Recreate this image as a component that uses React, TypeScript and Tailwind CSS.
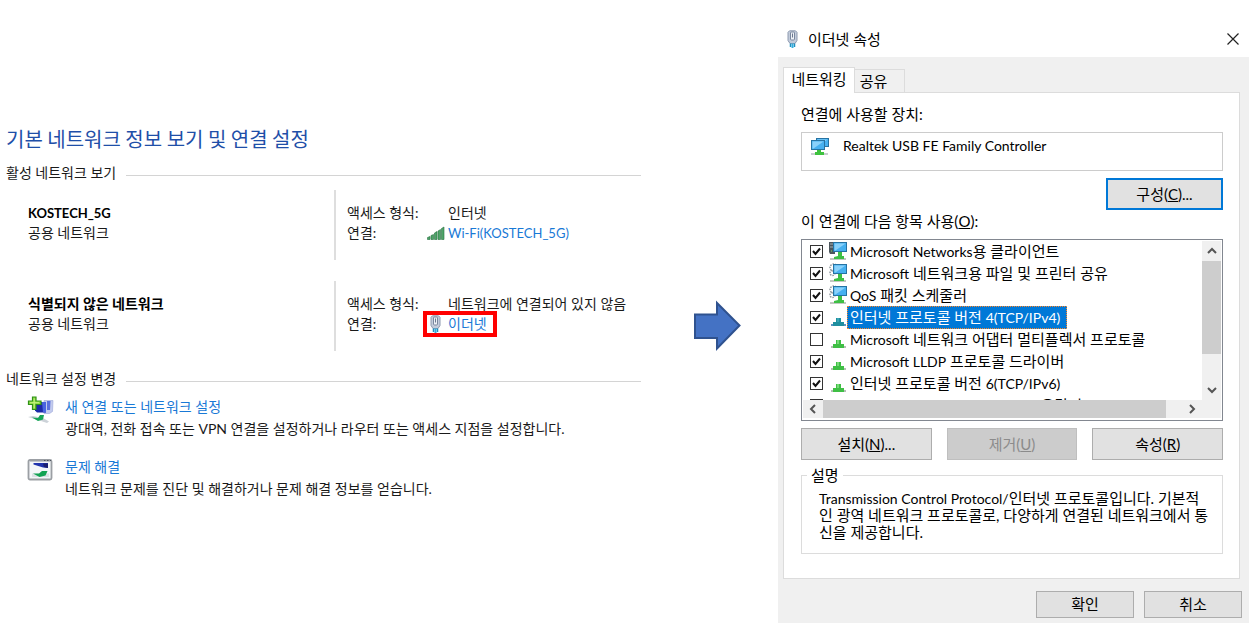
import type { ReactNode } from "react";

const ADAPTER_ITEMS = [
  { label: "Microsoft Networks용 클라이언트", icon: "client", checked: true },
  { label: "Microsoft 네트워크용 파일 및 프린터 공유", icon: "service", checked: true },
  { label: "QoS 패킷 스케줄러", icon: "service", checked: true },
  { label: "인터넷 프로토콜 버전 4(TCP/IPv4)", icon: "protocol", checked: true, selected: true },
  { label: "Microsoft 네트워크 어댑터 멀티플렉서 프로토콜", icon: "protocol", checked: false },
  { label: "Microsoft LLDP 프로토콜 드라이버", icon: "protocol", checked: true },
  { label: "인터넷 프로토콜 버전 6(TCP/IPv6)", icon: "protocol", checked: true },
  { label: "Link-Layer Topology Discovery 응답기", icon: "protocol", checked: true },
];

// Latin runs are set one size smaller than the Hangul around them.
function MixedText({ text }: { text: string }) {
  return text.split(/([A-Za-z0-9()/-]+(?: [A-Za-z0-9()/-]+)*)/).map((run, i) =>
    i % 2 ? (
      <span key={i} className="text-[14px]">
        {run}
      </span>
    ) : (
      run
    )
  );
}

function PlugIcon() {
  return (
    <svg width="18" height="18" viewBox="0 0 18 18" className="shrink-0" aria-hidden="true">
      <path d="M5.500 .8h6l1.500 1.500v8.200l-2 3h-5l-2-3V2.300z" fill="#c3ccdb" stroke="#8e9ab0" />
      <rect x="6.500" y="2" width="4" height="8" rx="1" fill="#eef1f6" stroke="#7a879e" />
      <path d="M8.500 3.500v4" stroke="#6a7890" />
      <path d="M6.500 13.500V17M10.500 13.500V17" stroke="#1f8fc0" strokeWidth="1.500" />
      <path d="M8.500 13.500V18" stroke="#35aede" strokeWidth="2" />
    </svg>
  );
}

function SignalIcon() {
  return (
    <svg width="18" height="18" viewBox="0 0 18 18" className="shrink-0" aria-hidden="true">
      <path
        d="M.5 15.500v-2l2.500-1v3zM4 15.500v-4l2.500-1v5zM7.500 15.500V9l2.500-1.500v8zM11 15.500V7l2.500-1.500v10zM14.500 15.500V4.500L17 3v12.500z"
        fill="#4fa468"
        stroke="#26713f"
        strokeWidth=".6"
      />
    </svg>
  );
}

function NewConnectionIcon() {
  return (
    <svg width="28" height="28" viewBox="0 0 28 28" className="shrink-0" aria-hidden="true">
      <path d="M17 4.500h9l-.5 11-3 2H17z" fill="#c3cbee" stroke="#9aa6d8" strokeWidth=".6" />
      <path d="M20 5h3.500l-.5 9h-3z" fill="#5a70dc" />
      <path d="M8 6h11v10.500H10l-2-2z" fill="#1c2aa8" />
      <path d="M15 6h4v10.500h-3z" fill="#4864e0" />
      <path d="M1 21l5-1 10 2 6 3.500-2 1.500-9-3z" fill="#ccd2d8" />
      <path d="M5 21.500l6 .5 2-3h4l-1 4.500-5 1.500z" fill="#18a558" />
      <path d="M5.500 1h3.500v4h5v3.500H9v5H5.500v-5h-4V5h4z" fill="#8cdb45" stroke="#2f9116" strokeWidth="1.200" />
      <path d="M7.200 2.500v9.500M3 6.700h9" stroke="#c5f27f" />
    </svg>
  );
}

function TroubleshootIcon() {
  return (
    <svg width="28" height="28" viewBox="0 0 28 28" className="shrink-0" aria-hidden="true">
      <rect x="1.500" y="4" width="23" height="19.500" rx="1.500" fill="#f3f6f9" stroke="#9b9fa4" strokeWidth="1.800" />
      <path d="M3 5.500h21" stroke="#c3c7cc" />
      <path d="M17 4.500h1.500M20 4.500h1.500M23 4.500h1" stroke="#4d555f" />
      <path d="M6.500 7H21v5l-5-.5-9.500-3z" fill="#2034ae" />
      <path d="M16 7.500h5V12l-4-1z" fill="#1a1f70" />
      <path d="M5 17.500h17V21H5z" fill="#dbe2e6" />
      <path d="M6 17.500h6l3-2.500h5.500l-2 4.500-6 1.500z" fill="#12a354" />
    </svg>
  );
}

function Monitor({ x, y, w, h }: { x: number; y: number; w: number; h: number }) {
  return (
    <g>
      <rect x={x} y={y} width={w} height={h} fill="#46b0f0" stroke="#2673a3" />
      <path d={`M${x + 1} ${y + 1}h${w - 2}l-${w - 3} ${h - 2}h-1z`} fill="#8ad1fa" />
    </g>
  );
}

function AdapterIcon() {
  return (
    <svg width="20" height="20" viewBox="0 0 20 20" className="shrink-0" aria-hidden="true">
      <Monitor x={6.5} y={2.5} w={12} h={8} />
      <Monitor x={1.5} y={4.5} w={13} h={9} />
      <path d="M1 18h17" stroke="#c9cdd0" strokeWidth="2" />
      <path d="M7 14h4v2h3v3H5v-3h2z" fill="#3ec23e" />
    </svg>
  );
}

function ItemIcon({ kind }: { kind: string }) {
  if (kind === "protocol" || kind === "protocol-selected") {
    const selected = kind === "protocol-selected";
    return (
      <svg width="18" height="20" viewBox="0 0 18 20" className="shrink-0" aria-hidden="true">
        <path d="M2 17h15v2H2z" fill={selected ? "#5b93c4" : "#b5bcb5"} />
        <path d="M7 11h5v4h3v4H4v-4h3z" fill={selected ? "#1f8f9f" : "#3fbf45"} />
        <path d="M8 11h2v4H8z" fill={selected ? "#3aa5b5" : "#77db77"} />
      </svg>
    );
  }
  return (
    <svg width="18" height="20" viewBox="0 0 18 20" className="shrink-0" aria-hidden="true">
      {kind === "client" ? (
        <g>
          <path d="M0 1h6v12H1L0 11z" fill="#4d565c" />
          <path d="M1 3h3M1 6h3" stroke="#a4b0b6" />
          <path d="M2 10h1" stroke="#6ede6e" />
        </g>
      ) : (
        <g fill="none" stroke="#8e979d" strokeWidth="1.500">
          <circle cx="4.500" cy="4.500" r="3.500" strokeDasharray="1.500 1" />
          <circle cx="3.500" cy="10" r="2.500" strokeDasharray="1.500 1" />
        </g>
      )}
      <Monitor x={4.5} y={1.5} w={13} h={9} />
      <path d="M1 18h16" stroke="#c2c7c2" strokeWidth="2" />
      <path d="M9 11h4v4h2v3H5v-2l4-1z" fill="#3ebf45" />
    </svg>
  );
}

function Chevron({ dir }: { dir: "up" | "down" | "left" | "right" }) {
  const paths = {
    up: "M2 8l4-4 4 4",
    down: "M2 4l4 4 4-4",
    left: "M8 2L4 6l4 4",
    right: "M4 2l4 4-4 4",
  };
  return (
    <svg width="12" height="12" viewBox="0 0 12 12" aria-hidden="true">
      <path d={paths[dir]} fill="none" stroke="#555" strokeWidth="2" />
    </svg>
  );
}

function SectionHeading({ children }: { children: ReactNode }) {
  return (
    <h2 className="flex items-center gap-2.5 text-[14px] leading-5">
      {children}
      <span className="mt-1 h-px flex-1 bg-[#d4d4d4]" />
    </h2>
  );
}

function NetworkRow({ name, access, children }: { name: ReactNode; access: string; children: ReactNode }) {
  return (
    <section className="flex pl-[22px] leading-5">
      <div className="w-[306px] pt-[13px]">
        <h3 className="font-bold text-black">{name}</h3>
        <p>공용 네트워크</p>
      </div>
      <dl className="grid flex-1 grid-cols-[80px_1fr] content-start border-l-2 border-[#dedede] pt-[13px] pb-[17px] pl-[11px]">
        <dt>액세스 형식:</dt>
        <dd className="pl-[21px]">{access}</dd>
        <dt>연결:</dt>
        <dd className="flex items-center">{children}</dd>
      </dl>
    </section>
  );
}

function TaskLink({ icon, title, text }: { icon: ReactNode; title: string; text: string }) {
  return (
    <div className="flex gap-2.5 pl-[21px] leading-[22px]">
      {icon}
      <div>
        <a href="#" className="text-[#1979d6]">{title}</a>
        <p>{text}</p>
      </div>
    </div>
  );
}

const BUTTON_VARIANTS = {
  normal: "border border-[#adadad] disabled:border-[#bfbfbf]",
  focused: "border-2 border-[#0078d7]",
};

type DialogButtonProps = {
  children: ReactNode;
  variant?: keyof typeof BUTTON_VARIANTS;
  className?: string;
  disabled?: boolean;
};

function DialogButton({ children, variant = "normal", className = "", disabled = false }: DialogButtonProps) {
  return (
    <button
      type="button"
      disabled={disabled}
      className={`bg-[#e1e1e1] text-center disabled:bg-[#cccccc] disabled:text-[#8b8b8b] ${BUTTON_VARIANTS[variant]} ${className}`}
    >
      {children}
    </button>
  );
}

function NetworkCenter() {
  return (
    <main className="min-w-0 flex-1 pt-[127px] pl-1.5 font-['Lato','Noto_Sans_CJK_KR',sans-serif] text-[14px]">
      <h1 className="font-['Noto_Sans_CJK_KR',sans-serif] text-[20px] leading-6 text-[#1f4fa8]">
        기본 네트워크 정보 보기 및 연결 설정
      </h1>
      <div className="mt-3">
        <SectionHeading>활성 네트워크 보기</SectionHeading>
      </div>
      <div className="mt-[7px] flex flex-col gap-[21px]">
        <NetworkRow name={<span className="text-[13px]">KOSTECH_5G</span>} access="인터넷">
          <a href="#" className="flex items-center gap-[3px] text-[13px] text-[#1979d6]">
            <SignalIcon />
            Wi-Fi(KOSTECH_5G)
          </a>
        </NetworkRow>
        <NetworkRow name="식별되지 않은 네트워크" access="네트워크에 연결되어 있지 않음">
          <a href="#" className="flex h-[18px] items-center gap-[3px] pr-1.5 text-[#1979d6] outline-4 outline-[#ff0000]">
            <PlugIcon />
            이더넷
          </a>
        </NetworkRow>
      </div>
      <div className="mt-[18px]">
        <SectionHeading>네트워크 설정 변경</SectionHeading>
      </div>
      <div className="mt-[7px] flex flex-col gap-4">
        <TaskLink
          icon={<NewConnectionIcon />}
          title="새 연결 또는 네트워크 설정"
          text="광대역, 전화 접속 또는 VPN 연결을 설정하거나 라우터 또는 액세스 지점을 설정합니다."
        />
        <TaskLink
          icon={<TroubleshootIcon />}
          title="문제 해결"
          text="네트워크 문제를 진단 및 해결하거나 문제 해결 정보를 얻습니다."
        />
      </div>
    </main>
  );
}

function ItemList() {
  return (
    <div className="mt-2 border border-[#828790] px-px pb-0.5">
      <div className="flex h-[160px]">
        <ul className="min-w-0 flex-1 overflow-hidden">
          {ADAPTER_ITEMS.map((item) => (
            <li key={item.label}>
              <label className="flex h-[22px] items-center pl-[7px] whitespace-nowrap">
                <span className="relative mr-1.5 flex">
                  <input
                    type="checkbox"
                    defaultChecked={item.checked}
                    className="peer size-[13px] appearance-none border border-[#333] bg-white"
                  />
                  <svg viewBox="0 0 13 13" className="pointer-events-none absolute inset-0 hidden size-[13px] peer-checked:block" aria-hidden="true">
                    <path d="M3 6l2.500 3L10 3.500" fill="none" stroke="#111" strokeWidth="2" />
                  </svg>
                </span>
                <ItemIcon kind={item.selected ? "protocol-selected" : item.icon} />
                <span
                  className={
                    item.selected
                      ? "border border-dotted border-[#ff8728] bg-[#0078d7] pr-1.5 pl-0.5 leading-5 text-white"
                      : "pl-[3px] leading-5"
                  }
                >
                  <MixedText text={item.label} />
                </span>
              </label>
            </li>
          ))}
        </ul>
        <div className="mt-px flex w-[19px] flex-col bg-[#f0f0f0]">
          <button type="button" aria-label="위로" className="flex h-5 items-center justify-center">
            <Chevron dir="up" />
          </button>
          <div className="h-[93px] bg-[#cdcdcd]" />
          <button type="button" aria-label="아래로" className="mt-auto flex h-5 items-center justify-center">
            <Chevron dir="down" />
          </button>
        </div>
      </div>
      <div className="flex h-[18px] bg-[#f0f0f0] pr-[19px]">
        <button type="button" aria-label="왼쪽" className="flex w-5 items-center justify-center">
          <Chevron dir="left" />
        </button>
        <div className="mr-4 flex-1 bg-[#cdcdcd]" />
        <button type="button" aria-label="오른쪽" className="flex w-5 items-center justify-center">
          <Chevron dir="right" />
        </button>
      </div>
    </div>
  );
}

function EthernetDialog() {
  return (
    <div
      role="dialog"
      aria-label="이더넷 속성"
      className="mt-[21px] w-[471px] shrink-0 font-['Lato','Noto_Sans_CJK_KR',sans-serif] text-[15px] text-black"
    >
      <header className="flex h-9 items-center pr-2.5 pl-1.5">
        <PlugIcon />
        <h2 className="ml-1.5 flex-1">이더넷 속성</h2>
        <button type="button" aria-label="닫기">
          <svg width="12" height="12" viewBox="0 0 12 12" aria-hidden="true">
            <path d="M.5.5l11 11M11.500.5l-11 11" stroke="#222" strokeWidth="1.200" />
          </svg>
        </button>
      </header>

      <div className="bg-[#f0f0f0] pt-2.5 pb-[5px]">
        <div role="tablist" className="flex items-end pl-[5px] leading-5">
          <button type="button" role="tab" aria-selected="true" className="relative z-10 -mb-px h-[26px] w-[72px] border border-b-0 border-[#dcdcdc] bg-white pb-1">
            네트워킹
          </button>
          <button type="button" role="tab" aria-selected="false" className="h-[23px] w-[50px] border border-b-0 border-l-0 border-[#dcdcdc] pr-3">
            공유
          </button>
        </div>

        <div className="mr-[9px] ml-[5px] border border-[#dcdcdc] bg-white pt-[11px] pr-4 pb-6 pl-[17px]">
          <p className="leading-5">연결에 사용할 장치:</p>
          <div className="mt-2 flex h-[39px] items-start gap-[13px] border border-[#cccccc] pt-[3px] pl-2">
            <AdapterIcon />
            <span className="text-[14px] leading-5">Realtek USB FE Family Controller</span>
          </div>
          <div className="mt-[7px] flex justify-end">
            <DialogButton variant="focused" className="h-8 w-[117px]">
              구성(<u>C</u>)...
            </DialogButton>
          </div>
          <p className="mt-px leading-5">
            이 연결에 다음 항목 사용(<u>O</u>):
          </p>
          <ItemList />
          <div className="mt-[7px] grid grid-cols-3 gap-[15px]">
            <DialogButton className="h-8">
              설치(<u>N</u>)...
            </DialogButton>
            <DialogButton className="h-8" disabled>
              제거(<u>U</u>)
            </DialogButton>
            <DialogButton className="h-8">
              속성(<u>R</u>)
            </DialogButton>
          </div>
          <fieldset className="mt-[5px] min-h-[89px] border border-[#dcdcdc] pr-3 pl-[17px]">
            <legend className="-ml-3 px-1 leading-5">설명</legend>
            <p className="mt-[5px] leading-[17px] break-all">
              <MixedText text="Transmission Control Protocol/인터넷 프로토콜입니다. 기본적인 광역 네트워크 프로토콜로, 다양하게 연결된 네트워크에서 통신을 제공합니다." />
            </p>
          </fieldset>
        </div>

        <footer className="mt-3 flex justify-end gap-2.5 pr-[7px]">
          <DialogButton className="h-[27px] w-[98px]">확인</DialogButton>
          <DialogButton className="h-[27px] w-[98px]">취소</DialogButton>
        </footer>
      </div>
    </div>
  );
}

export default function App() {
  return (
    <div className="flex min-h-screen items-start bg-white pr-1 text-[#1a1a1a]">
      <NetworkCenter />
      <svg width="48" height="52" viewBox="0 0 48 52" className="mt-[300px] mr-9 ml-[53px] shrink-0" aria-hidden="true">
        <path d="M1 14.500h22V3l22.500 22.500L23 48.500V38H1z" fill="#4472c4" stroke="#2f528f" strokeWidth="2" />
      </svg>
      <EthernetDialog />
    </div>
  );
}
